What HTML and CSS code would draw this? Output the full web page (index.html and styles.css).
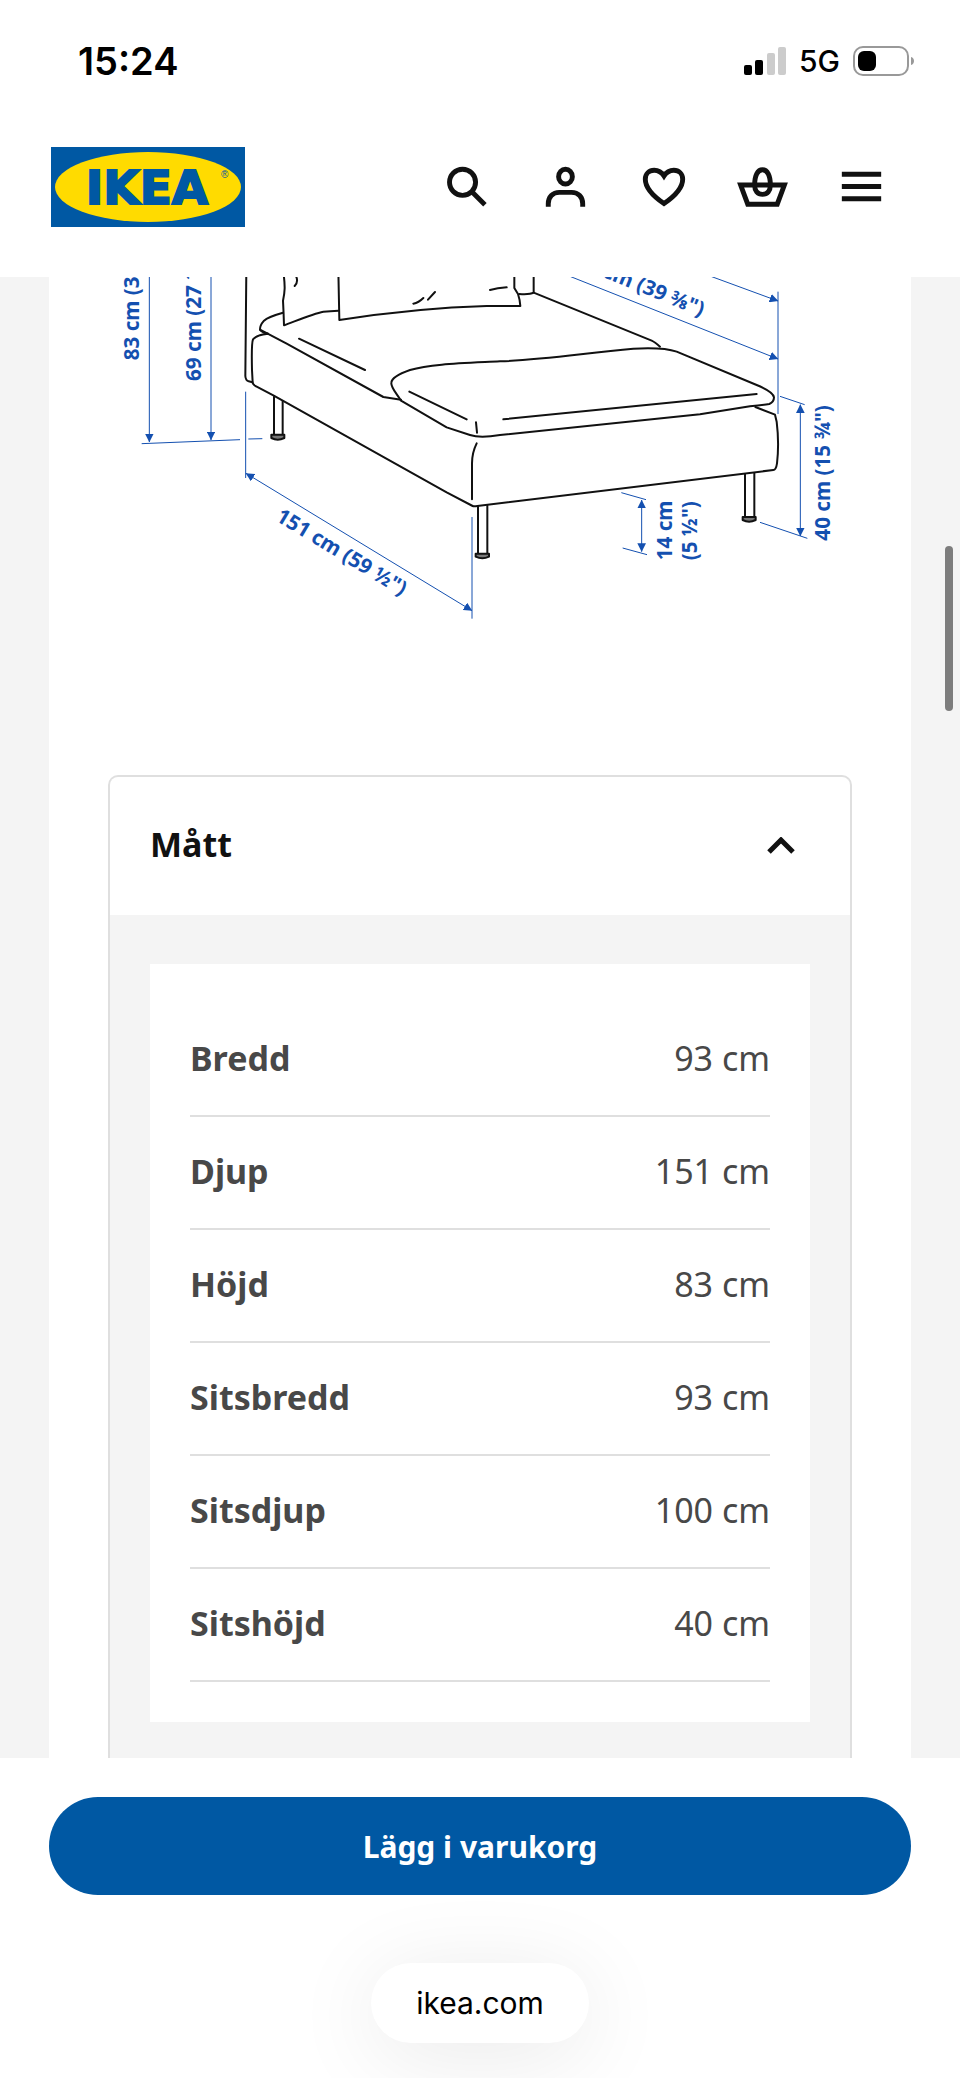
FILE: index.html
```html
<!DOCTYPE html>
<html lang="sv">
<head>
    <meta charset="UTF-8">
    <meta name="viewport" content="width=device-width, initial-scale=1.0">
    <title>IKEA - Mått</title>
    <link rel="stylesheet" href="styles.css">
</head>
<body>
    <header class="top">
        <div class="status-bar">
            <span class="time">15:24</span>
            <div class="status-icons">
                <svg class="signal" viewBox="0 0 42 28" aria-hidden="true">
                    <rect x="0" y="18" width="8" height="10" rx="2"/>
                    <rect x="11" y="13" width="8" height="15" rx="2"/>
                    <rect class="off" x="23" y="6" width="8" height="22" rx="2"/>
                    <rect class="off" x="34" y="0" width="8" height="28" rx="2"/>
                </svg>
                <span class="network">5G</span>
                <svg class="battery" viewBox="0 0 62 30" aria-hidden="true">
                    <rect class="shell" x="1" y="1" width="54" height="28" rx="9"/>
                    <rect x="5" y="5" width="18" height="20" rx="6"/>
                    <path class="nub" d="M58 11c4 1 4 7 0 8z"/>
                </svg>
            </div>
        </div>
        <nav class="nav">
            <a class="logo" href="#" aria-label="IKEA">
                <svg viewBox="0 0 194 80">
                    <rect width="194" height="80" fill="#0058a3"/>
                    <ellipse cx="97" cy="40" rx="93" ry="35" fill="#ffdb00"/>
                    <text class="logo-text" x="96" y="57" text-anchor="middle">IKEA</text>
                    <text class="logo-mark" x="170" y="31">®</text>
                </svg>
            </a>
            <div class="nav-actions">
                <button type="button" aria-label="Sök">
                    <svg class="icon" viewBox="0 0 24 24"><circle cx="10.8" cy="10.3" r="5.3"/><path d="m14.5 14 5.4 5.4"/></svg>
                </button>
                <button type="button" aria-label="Logga in">
                    <svg class="icon" viewBox="0 0 24 24"><ellipse cx="12.4" cy="8" rx="2.8" ry="3"/><path d="M5.4 20.2V19c0-2.7 1.8-4.6 4.5-4.6h5c2.7 0 4.5 1.9 4.5 4.6v1.2"/></svg>
                </button>
                <button type="button" aria-label="Favoriter">
                    <svg class="icon" viewBox="0 0 24 24"><path d="M12.2 18.9C7.4 15.6 4.6 12.2 4.6 9c0-2.2 1.6-3.6 3.6-3.6 1.7 0 3.1.9 4 2.3.9-1.4 2.3-2.3 4-2.3 2 0 3.6 1.4 3.6 3.6 0 3.2-2.8 6.6-7.6 9.9z"/></svg>
                </button>
                <button type="button" aria-label="Varukorg">
                    <svg class="icon" viewBox="0 0 24 24"><path d="M3.1 11.4h17.8L18 19.2H6z"/><path d="M12 5.2c-2 0-3.2 2.4-3.2 6.2 0 2.4 1.2 3.8 3.2 3.8s3.2-1.4 3.2-3.8c0-3.8-1.2-6.2-3.2-6.2z"/></svg>
                </button>
                <button type="button" aria-label="Meny">
                    <svg class="icon" viewBox="0 0 24 24"><path d="M4 7h16M4 12h16M4 17h16"/></svg>
                </button>
            </div>
        </nav>
    </header>

    <main class="page">
        <article class="sheet">
            <svg class="drawing" viewBox="-153 21 2586 1494" role="img" aria-label="Måttskiss">
                <defs>
                    <marker id="arrow" viewBox="0 0 26 26" refX="25" refY="13" markerWidth="26" markerHeight="26" markerUnits="userSpaceOnUse" orient="auto-start-reverse">
                        <path d="M0 0 26 13 0 26z" fill="#1450b0"/>
                    </marker>
                </defs>

                <!-- sofa -->
                <g class="ink">
                    <path d="M439 0 436 318Q437 332 446 334L457 337"/>
                    <path d="M549 0C557 50 554 70 549 92Q551 130 552 166C600 148 640 131 670 125Q690 123 715 122"/>
                    <path d="M715 0 718 150C860 128 1010 112 1160 108L1261 108Q1260 90 1254 72L1243 54 1243 0"/>
                    <path d="M549 128Q505 140 492 152 479 167 480 179 484 186 504 191"/>
                    <path d="M504 191Q470 194 459 208 454 220 456 300L458 337Q458 344 470 350L520 376 1040 667 1118 708Q1122 710 1132 708L2020 600Q2028 600 2031 580 2038 520 2030 455L2025 434 1966 411"/>
                    <path d="M480 179 560 221 850 381 903 389"/>
                    <path d="M1200 274C1080 280 990 282 930 300 890 314 875 325 874 338 872 352 888 368 903 392L1040 472 1110 495Q1140 505 1200 495L1800 433 1950 409Q1990 405 2008 402 2022 396 2022 382 2020 366 1970 345L1730 245Q1690 231 1600 236C1440 251 1330 270 1200 274"/>
                    <path d="M1301 0 1301 68Q1290 74 1258 72"/>
                    <path d="M1301 68 1655 212Q1664 216 1680 230"/>
                    <path d="M588 18Q596 36 584 48M940 101Q956 98 970 84M984 89 1005 66M1170 60Q1192 54 1220 52"/>
                    <path d="M597 206 795 300M928 365 1100 448M1128 457 1131 488M1210 448 1970 372"/>
                    <path d="M1130 520Q1116 548 1116 580L1116 688"/>
                </g>

                <!-- legs -->
                <g class="ink">
                    <path d="M522 380V494M548 394V494M1134 710V851M1162 707V851M1935 612V741M1963 609V741"/>
                    <path d="M514 494h39v10q-20 10-39 0zM1127 851h40v9q-20 10-40 0zM1928 741h39v9q-20 10-39 0z" fill="#777"/>
                </g>

                <!-- measuring lines -->
                <g class="measure">
                    <path d="M125 521 420 509M445 507 487 506M437 365V624M1116 741V1046"/>
                    <path d="M2034 65V432M2040 379 2114 404M1980 757 2122 805M1564 668 1638 689M1568 834 1641 854"/>
                    <g marker-end="url(#arrow)">
                        <path d="M148 0V516"/>
                        <path d="M333 0V510"/>
                        <path d="M1800 7 2034 93"/>
                        <path d="M1362 0 2034 267"/>
                    </g>
                    <g marker-start="url(#arrow)" marker-end="url(#arrow)">
                        <path d="M438 610 1116 1022"/>
                        <path d="M2101 404V798"/>
                        <path d="M1625 690V845"/>
                    </g>
                </g>
                <g class="label">
                    <text transform="translate(117 271) rotate(-90)">83 cm (32 ⅝")</text>
                    <text transform="translate(302 333) rotate(-90)">69 cm (27 ⅛")</text>
                    <text transform="translate(524 750) rotate(31)">151 cm (59 ½")</text>
                    <text transform="translate(1803 140) rotate(22)" text-anchor="end">100 cm (39 ⅜")</text>
                    <text transform="translate(1716 871) rotate(-90)">14 cm</text>
                    <text transform="translate(1790 871) rotate(-90)">(5 ½")</text>
                    <text transform="translate(2190 812) rotate(-90)">40 cm (15 ¾")</text>
                </g>
            </svg>

            <section class="accordion">
                <h2 class="accordion-heading">
                    <button type="button" class="accordion-toggle" aria-expanded="true" aria-controls="measurements">
                        <span>Mått</span>
                        <svg class="chevron" viewBox="0 0 28 18" aria-hidden="true"><path d="M2 15 14 3l12 12"/></svg>
                    </button>
                </h2>
                <div class="accordion-body" id="measurements">
                    <div class="table-box">
                        <table class="measurements">
                            <tr><th scope="row">Bredd</th><td>93 cm</td></tr>
                            <tr><th scope="row">Djup</th><td>151 cm</td></tr>
                            <tr><th scope="row">Höjd</th><td>83 cm</td></tr>
                            <tr><th scope="row">Sitsbredd</th><td>93 cm</td></tr>
                            <tr><th scope="row">Sitsdjup</th><td>100 cm</td></tr>
                            <tr><th scope="row">Sitshöjd</th><td>40 cm</td></tr>
                        </table>
                    </div>
                </div>
            </section>
        </article>
    </main>

    <footer class="bottom">
        <button type="button" class="buy">Lägg i varukorg</button>
        <a class="address" href="#">ikea.com</a>
    </footer>
    <div class="scroll-thumb"></div>
</body>
</html>
```

FILE: styles.css
```css
* {
    box-sizing: border-box;
}
body {
    margin: 0;
    min-height: 100vh;
    display: flex;
    flex-direction: column;
    position: relative;
    overflow-x: hidden;
    background-color: #fff;
    color: #111;
    font-family: "Noto Sans", sans-serif;
}
button {
    font-family: inherit;
    border: none;
    background: none;
    padding: 0;
    cursor: pointer;
}
svg {
    display: block;
}

/* Status bar */
.status-bar {
    display: flex;
    justify-content: space-between;
    align-items: center;
    height: 122px;
    padding: 0 45px 0 78px;
    color: #000;
    font-family: Inter, sans-serif;
}
.time {
    font-size: 38px;
    font-weight: 600;
}
.status-icons {
    display: flex;
    align-items: center;
    gap: 13px;
}
.signal {
    width: 42px;
    height: 28px;
}
.signal .off {
    fill: #ccc;
}
.network {
    font-size: 30px;
    font-weight: 500;
}
.battery {
    width: 62px;
    height: 30px;
}
.battery .shell {
    fill: none;
    stroke: #999;
    stroke-width: 2;
}
.battery .nub {
    fill: #999;
}

/* Navigation */
.nav {
    display: flex;
    justify-content: space-between;
    align-items: center;
    height: 155px;
    padding: 0 49px 26px 51px;
}
.logo svg {
    width: 194px;
    height: 80px;
}
.logo-text {
    font-family: "DejaVu Sans", sans-serif;
    font-size: 47px;
    font-weight: 700;
    fill: #0058a3;
    stroke: #0058a3;
    stroke-width: 2;
}
.logo-mark {
    font-family: "Liberation Sans", sans-serif;
    font-size: 10px;
    fill: #0058a3;
}
.nav-actions {
    display: flex;
}
.nav-actions button {
    display: flex;
    justify-content: center;
    width: 99px;
}
.icon {
    width: 59px;
    height: 59px;
    fill: none;
    stroke: #111;
    stroke-width: 2;
}

/* Product sheet */
.page {
    flex: 1;
    padding: 0 49px;
    background-color: #f4f4f4;
}
.sheet {
    height: 100%;
    background-color: #fff;
}
.drawing {
    width: 100%;
    height: auto;
}
.ink {
    fill: none;
    stroke: #111;
    stroke-width: 6;
    stroke-linecap: round;
    stroke-linejoin: round;
}
.measure {
    fill: none;
    stroke: #1450b0;
    stroke-width: 3;
}
.label {
    fill: #1450b0;
    font-size: 62px;
    font-weight: 700;
}

.accordion {
    margin: 0 59px;
    border: 2px solid #dfdfdf;
    border-bottom: none;
    border-radius: 10px 10px 0 0;
}
.accordion-heading {
    margin: 0;
}
.accordion-toggle {
    display: flex;
    justify-content: space-between;
    align-items: center;
    width: 100%;
    height: 138px;
    padding: 0 55px 4px 40px;
    color: #111;
    font-size: 34px;
    font-weight: 700;
}
.chevron {
    width: 28px;
    height: 18px;
    margin-top: 4px;
    fill: none;
    stroke: #111;
    stroke-width: 5;
}
.accordion-body {
    padding: 49px 40px 36px;
    background-color: #f4f4f4;
}
.table-box {
    padding: 40px;
    background-color: #fff;
}
.measurements {
    width: 100%;
    border-collapse: separate;
    border-spacing: 0;
    color: #484848;
    font-size: 34px;
}
.measurements th,
.measurements td {
    height: 113px;
    padding: 0 0 4px;
    border-bottom: 2px solid #dfdfdf;
}
.measurements th {
    text-align: left;
    font-weight: 700;
}
.measurements td {
    text-align: right;
}

/* Bottom bar */
.bottom {
    display: flex;
    flex-direction: column;
    align-items: center;
    gap: 68px;
    padding: 39px 49px 35px;
    overflow: hidden;
    background-color: #fff;
}
.buy {
    position: relative;
    z-index: 1;
    width: 100%;
    height: 98px;
    border-radius: 49px;
    background-color: #0058a3;
    color: #fff;
    font-size: 30px;
    font-weight: 700;
}
.address {
    padding: 0 45px;
    border-radius: 40px;
    background-color: #fff;
    box-shadow: 0 12px 90px rgba(0, 0, 0, 0.09);
    color: #000;
    font-family: Inter, sans-serif;
    font-size: 30px;
    line-height: 80px;
    text-decoration: none;
}

/* Scroll position, drawn over the page edge */
.scroll-thumb {
    position: absolute;
    top: 546px;
    right: 7px;
    width: 8px;
    height: 165px;
    border-radius: 4px;
    background-color: #7d7d7d;
}
```
